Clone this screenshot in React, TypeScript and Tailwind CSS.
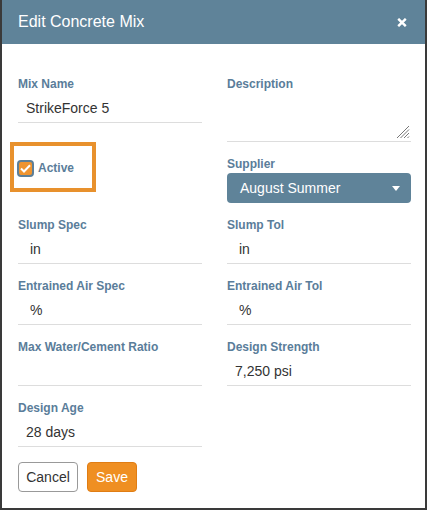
import React from 'react';

const labelCls = "block h-[14px] text-[12px] leading-[14px] font-bold text-[#5a7d9a]";
const inputCls = "mt-[2px] block w-full h-[30px] border-b border-[#dddddd] bg-transparent pl-[8px] text-[14px] text-[#333333] outline-none";

const Field = ({ label, value }: { label: string; value: string }) => (
  <div>
    <label className={labelCls}>{label}</label>
    <input className={inputCls} defaultValue={value} readOnly />
  </div>
);

export default function App() {
  return (
    <div className="w-[427px] h-[510px] bg-white border-l-2 border-r-2 border-b-2 border-[#3a3a3a] font-['Liberation_Sans',Arial,sans-serif] overflow-hidden">
      <div className="h-[44px] bg-[#5f8399] flex items-center justify-between pl-[16px] pr-[18px]">
        <h1 className="text-[16px] text-white font-normal">Edit Concrete Mix</h1>
        <button className="text-white" aria-label="Close">
          <svg width="10" height="9" viewBox="0 0 10 9">
            <path d="M1.2 0.8 L8.8 8.2 M8.8 0.8 L1.2 8.2" stroke="white" strokeWidth="2.4" strokeLinecap="butt" />
          </svg>
        </button>
      </div>

      <div className="pl-[16px] pr-[14px] pt-[33px]">
        <div className="grid grid-cols-2 gap-x-[25px] gap-y-[15px] items-start">
          <Field label="Mix Name" value="StrikeForce 5" />
          <div>
            <label className={labelCls}>Description</label>
            <div className="relative mt-[2px] h-[49px] border-b border-[#dddddd]">
              <textarea className="w-full h-full resize-none bg-transparent outline-none text-[14px] pl-[8px]" readOnly />
              <svg className="absolute right-[1px] bottom-[2px]" width="14" height="14" viewBox="0 0 14 14">
                <path d="M13 1 L1 13 M13 4.5 L4.5 13 M13 8 L8 13 M13 11.5 L11.5 13" stroke="#777" strokeWidth="1" />
              </svg>
            </div>
          </div>

          <div className="relative">
            <div className="absolute -left-[8px] -top-[15px] w-[86px] h-[50px] border-4 border-[#e8912d]" />
            <div className="mt-[2px] flex items-center gap-[4px] h-[18px]">
              <span className="-ml-[1px] w-[17px] h-[17px] rounded-[4px] border-2 border-[#5d7f98] bg-[#ef9430] flex items-center justify-center">
                <svg width="11" height="9" viewBox="0 0 11 9">
                  <path d="M1 4.5 L4 7.5 L10 1.2" stroke="white" strokeWidth="2" fill="none" />
                </svg>
              </span>
              <span className="text-[12px] font-bold text-[#5a7d9a]">Active</span>
            </div>
          </div>
          <div>
            <label className={labelCls}>Supplier</label>
            <div className="mt-[2px] h-[30px] rounded-[4px] bg-[#5f8399] flex items-center justify-between pl-[13px] pr-[11px]">
              <span className="text-[14px] text-white">August Summer</span>
              <svg width="8" height="5" viewBox="0 0 8 5">
                <path d="M0 0 L8 0 L4 5 Z" fill="white" />
              </svg>
            </div>
          </div>

          <Field label="Slump Spec" value=" in" />
          <Field label="Slump Tol" value=" in" />
          <Field label="Entrained Air Spec" value=" %" />
          <Field label="Entrained Air Tol" value=" %" />
          <Field label="Max Water/Cement Ratio" value="" />
          <Field label="Design Strength" value="7,250 psi" />
          <Field label="Design Age" value="28 days" />
        </div>

        <div className="mt-[15px] flex gap-[9px]">
          <button className="w-[60px] h-[30px] rounded-[4px] border border-[#999999] bg-white text-[14px] text-[#333333]">Cancel</button>
          <button className="w-[50px] h-[30px] rounded-[4px] border border-[#e07d14] bg-[#ef8f22] text-[14px] text-white">Save</button>
        </div>
      </div>
    </div>
  );
}
